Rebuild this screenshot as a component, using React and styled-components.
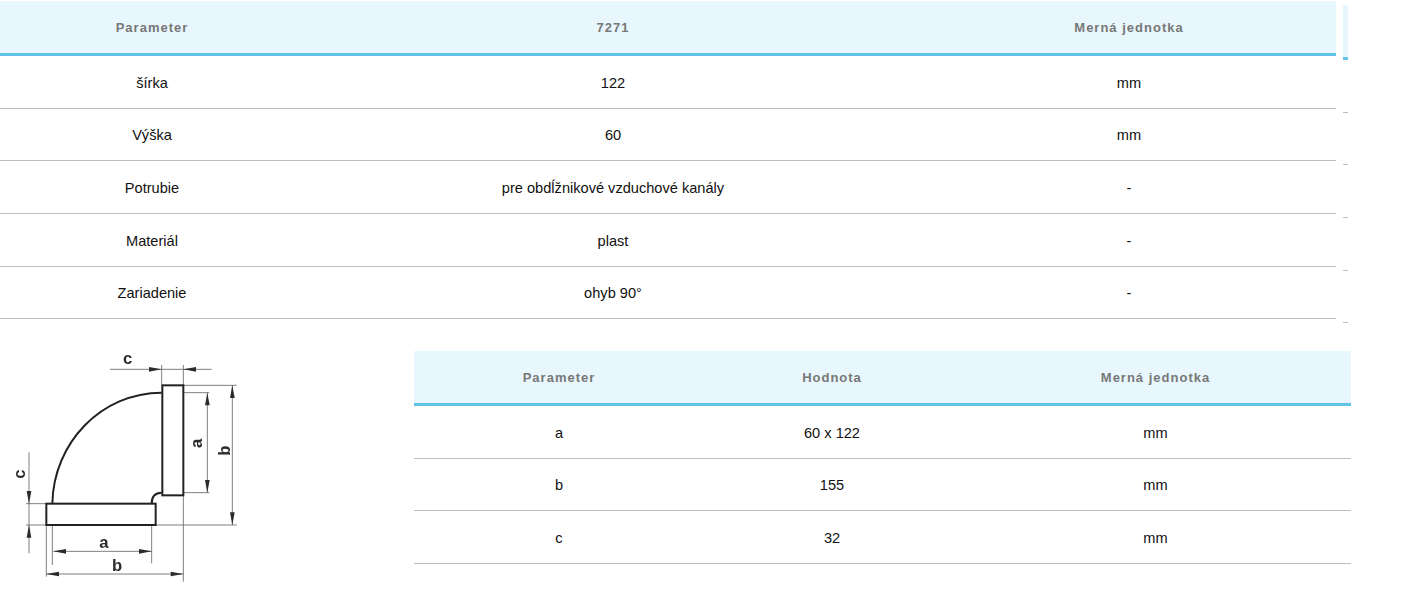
import React from "react";
import styled, { createGlobalStyle } from "styled-components";

const GlobalStyle = createGlobalStyle`
	html, body {
		margin: 0;
		padding: 0;
		background: #fff;
	}
	body {
		font-family: "Liberation Sans", Arial, sans-serif;
		font-size: 14px;
		color: #111;
	}
`;

const Page = styled.div`
	width: 1425px;
	height: 598px;
	padding-top: 1px;
	box-sizing: border-box;
	overflow: hidden;
`;

const TopRow = styled.section`
	display: flex;
	align-items: flex-start;
	gap: 7px;
`;

const BottomRow = styled.section`
	display: flex;
	align-items: flex-start;
	margin-top: 28px;
`;

const Table = styled.table`
	width: ${p => p.$width}px;
	flex: none;
	table-layout: fixed;
	border-collapse: separate;
	border-spacing: 0;
`;

const HeadCell = styled.th`
	height: 52px;
	padding: 0;
	background: #e8f7fd;
	border-bottom: 3px solid #5ec3e6;
	box-sizing: content-box;
	color: #777;
	font-size: 13px;
	font-weight: 700;
	letter-spacing: 1px;
	text-align: center;
	vertical-align: middle;
`;

const Cell = styled.td`
	height: ${p => p.$height}px;
	padding: 1px 0 0;
	border-bottom: 1px solid #bdbdbd;
	box-sizing: border-box;
	font-size: 14.6px;
	line-height: 16px;
	text-align: center;
	vertical-align: middle;
`;

// cut off neighbour table, only a strip of it is visible
const Strip = styled.div`
	width: 5px;
	flex: none;
	padding-top: 4px;
`;

const StripHead = styled.div`
	height: 52px;
	background: #e8f7fd;
	border-bottom: 3px solid #5ec3e6;
`;

const StripRow = styled.div`
	height: ${p => p.$height}px;
	box-sizing: border-box;
	border-bottom: 1px solid #bdbdbd;
`;

const Figure = styled.div`
	width: 414px;
	flex: none;
`;

const Drawing = styled.svg`
	display: block;
	width: 260px;
	height: 250px;
	margin-top: -11px;
	filter: blur(0.3px);

	text {
		font-family: "Liberation Sans", Arial, sans-serif;
		font-size: 50px;
		font-weight: 700;
		fill: #2b2b2b;
		text-anchor: middle;
	}
`;

const paramRows = [
	{ id: "sirka", label: "šírka", value: "122", unit: "mm", height: 53 },
	{ id: "vyska", label: "Výška", value: "60", unit: "mm", height: 52 },
	{ id: "potrubie", label: "Potrubie", value: "pre obdĺžnikové vzduchové kanály", unit: "-", height: 53 },
	{ id: "material", label: "Materiál", value: "plast", unit: "-", height: 53 },
	{ id: "zariadenie", label: "Zariadenie", value: "ohyb 90°", unit: "-", height: 52 }
];

const sizeRows = [
	{ id: "a", label: "a", value: "60 x 122", unit: "mm", height: 53 },
	{ id: "b", label: "b", value: "155", unit: "mm", height: 52 },
	{ id: "c", label: "c", value: "32", unit: "mm", height: 53 }
];

const dimLines = [
	"M330 88H635", "M485 75V136", "M550 75V136",
	"M550 136H710", "M467 555H710", "M697 136V555",
	"M550 158H628", "M550 458H628", "M622 158V458",
	"M87 337V640", "M78 491H139", "M78 555H139",
	"M160 634H455", "M157 555V675", "M455 555V670",
	"M139 702H550", "M139 555V710", "M550 466V725"
];

// tip x, tip y, direction
const arrows = [
	[485, 88, "r"], [550, 88, "l"],
	[697, 136, "u"], [697, 555, "d"],
	[622, 158, "u"], [622, 458, "d"],
	[87, 491, "d"], [87, 555, "u"],
	[160, 634, "l"], [455, 634, "r"],
	[139, 702, "l"], [550, 702, "r"]
];

const arrowPoints = ([x, y, dir]) => {
	const len = 38;
	const half = 7;
	if (dir === "r") return `${x},${y} ${x - len},${y - half} ${x - len},${y + half}`;
	if (dir === "l") return `${x},${y} ${x + len},${y - half} ${x + len},${y + half}`;
	if (dir === "d") return `${x},${y} ${x - half},${y - len} ${x + half},${y - len}`;
	return `${x},${y} ${x - half},${y + len} ${x + half},${y + len}`;
};

const ElbowDrawing = () => (
	<Drawing viewBox="0 0 780 750">
		<g stroke="#666" strokeWidth="2.5" fill="none">
			{dimLines.map(d => <path key={d} d={d} />)}
		</g>
		<g fill="#2b2b2b">
			{arrows.map(a => <polygon key={a.join()} points={arrowPoints(a)} />)}
		</g>
		<g stroke="#222" strokeWidth="6" fill="none">
			<rect x="487" y="136" width="63" height="330" />
			<rect x="139" y="491" width="328" height="64" />
			<path d="M157 491C160 308 305 158 485 158" />
			<path d="M455 491C455 470 465 458 485 458" />
		</g>
		<text x="383" y="71">c</text>
		<text x="312" y="625">a</text>
		<text x="351" y="692">b</text>
		<text transform="translate(606 310) rotate(-90)">a</text>
		<text transform="translate(691 332) rotate(-90)">b</text>
		<text transform="translate(76 402) rotate(-90)">c</text>
	</Drawing>
);

const DataTable = ({ width, columns, headers, rows }) => (
	<Table $width={width}>
		<colgroup>
			{columns.map(c => <col key={c} style={{ width: c }} />)}
		</colgroup>
		<thead>
			<tr>
				{headers.map(h => <HeadCell key={h}>{h}</HeadCell>)}
			</tr>
		</thead>
		<tbody>
			{rows.map(row => (
				<tr key={row.id}>
					<Cell $height={row.height}>{row.label}</Cell>
					<Cell $height={row.height}>{row.value}</Cell>
					<Cell $height={row.height}>{row.unit}</Cell>
				</tr>
			))}
		</tbody>
	</Table>
);

const App = () => (
	<Page>
		<GlobalStyle />
		<TopRow>
			<DataTable
				width={1336}
				columns={[304, 618, 414]}
				headers={["Parameter", "7271", "Merná jednotka"]}
				rows={paramRows}
			/>
			<Strip>
				<StripHead />
				{paramRows.map(row => <StripRow key={row.id} $height={row.height} />)}
			</Strip>
		</TopRow>
		<BottomRow>
			<Figure>
				<ElbowDrawing />
			</Figure>
			<DataTable
				width={937}
				columns={[290, 256, 391]}
				headers={["Parameter", "Hodnota", "Merná jednotka"]}
				rows={sizeRows}
			/>
		</BottomRow>
	</Page>
);

export default App;
